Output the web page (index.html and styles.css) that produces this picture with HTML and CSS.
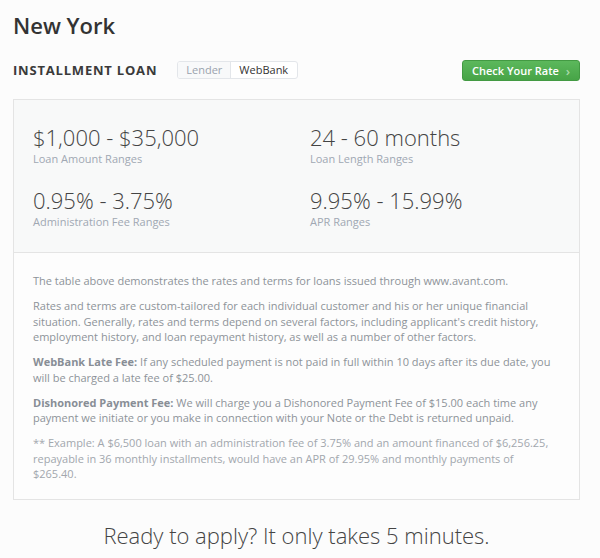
FILE: index.html
```html
<!DOCTYPE html>
<html>
<head>
<meta charset="utf-8">
<link rel="stylesheet" href="styles.css">
</head>
<body>
<div class="page">
  <h1 class="city">New York</h1>
  <div class="bar">
    <div class="bar-left">
      <span class="type">INSTALLMENT LOAN</span>
      <div class="toggle">
        <span class="tg tg-label">Lender</span>
        <span class="tg tg-value">WebBank</span>
      </div>
    </div>
    <a class="btn">Check Your Rate <span class="chev">&#8250;</span></a>
  </div>
  <div class="card">
    <div class="stats">
      <div class="stat">
        <div class="val">$1,000 - $35,000</div>
        <div class="lbl">Loan Amount Ranges</div>
      </div>
      <div class="stat">
        <div class="val">24 - 60 months</div>
        <div class="lbl">Loan Length Ranges</div>
      </div>
      <div class="stat">
        <div class="val">0.95% - 3.75%</div>
        <div class="lbl">Administration Fee Ranges</div>
      </div>
      <div class="stat">
        <div class="val">9.95% - 15.99%</div>
        <div class="lbl">APR Ranges</div>
      </div>
    </div>
    <div class="notes">
      <p>The table above demonstrates the rates and terms for loans issued through www.avant.com.</p>
      <p>Rates and terms are custom-tailored for each individual customer and his or her unique financial situation. Generally, rates and terms depend on several factors, including applicant's credit history, employment history, and loan repayment history, as well as a number of other factors.</p>
      <p><b>WebBank Late Fee:</b> If any scheduled payment is not paid in full within 10 days after its due date, you will be charged a late fee of $25.00.</p>
      <p><b>Dishonored Payment Fee:</b> We will charge you a Dishonored Payment Fee of $15.00 each time any payment we initiate or you make in connection with your Note or the Debt is returned unpaid.</p>
      <p class="ex">** Example: A $6,500 loan with an administration fee of 3.75% and an amount financed of $6,256.25, repayable in 36 monthly installments, would have an APR of 29.95% and monthly payments of $265.40.</p>
    </div>
  </div>
  <h2 class="cta">Ready to apply? It only takes 5 minutes.</h2>
</div>
</body>
</html>
```
FILE: styles.css
```css
html, body {
  margin: 0;
  padding: 0;
  background: #fcfcfc;
}
body {
  font-family: "Open Sans", "Liberation Sans", sans-serif;
  color: #333;
}
.page {
  padding: 0 20px 0 13px;
}
.city {
  margin: 0;
  padding-top: 10px;
  font-size: 22px;
  font-weight: 600;
  line-height: 30px;
  color: #333;
}
.bar {
  margin-top: 20px;
  display: flex;
  justify-content: space-between;
  align-items: center;
}
.bar-left {
  display: flex;
  align-items: center;
  margin-top: -2px;
}
.type {
  font-size: 13px;
  font-weight: 700;
  letter-spacing: 0.8px;
  color: #3a3a3a;
}
.toggle {
  margin-left: 20px;
  display: flex;
  border: 1px solid #e3e6ea;
  border-radius: 3px;
  overflow: hidden;
  background: #fff;
}
.tg {
  font-size: 11px;
  line-height: 16px;
  padding: 0 8px;
}
.tg-label {
  color: #9aa2ad;
  background: #f8f9fa;
  border-right: 1px solid #e3e6ea;
}
.tg-value {
  color: #333;
  padding-right: 9px;
}
.btn {
  display: flex;
  align-items: center;
  height: 21px;
  width: 118px;
  box-sizing: border-box;
  padding: 0 9px 0 9px;
  border-radius: 3px;
  background: linear-gradient(#5cb85c, #47a447);
  border: 1px solid #439a43;
  color: #fff;
  font-size: 11px;
  font-weight: 600;
  justify-content: space-between;
}
.chev {
  color: #a9d8a9;
  font-size: 13px;
}
.card {
  margin-top: 18px;
  border: 1px solid #e4e4e4;
  background: #fdfdfd;
}
.stats {
  display: grid;
  grid-template-columns: 277px 1fr;
  row-gap: 19px;
  padding: 22px 19px 23px 19px;
  background: #f8f9f9;
  border-bottom: 1px solid #e4e4e4;
}
.val {
  font-size: 22px;
  font-weight: 300;
  line-height: 30px;
  color: #444;
}
.lbl {
  font-size: 11px;
  line-height: 14px;
  color: #a0a8b3;
}
.notes {
  padding: 20px 24px 17px 19px;
}
.notes p {
  margin: 0 0 9.5px 0;
  font-size: 11px;
  line-height: 15.5px;
  color: #8d9399;
}
.notes p:last-child {
  margin-bottom: 0;
}
.notes b {
  font-weight: 700;
  color: #888e96;
}
.notes .ex {
  color: #a2a7ad;
}
.cta {
  margin: 20px 0 0 0;
  text-align: center;
  font-size: 22px;
  line-height: 30px;
  font-weight: 300;
  color: #444;
}
```
